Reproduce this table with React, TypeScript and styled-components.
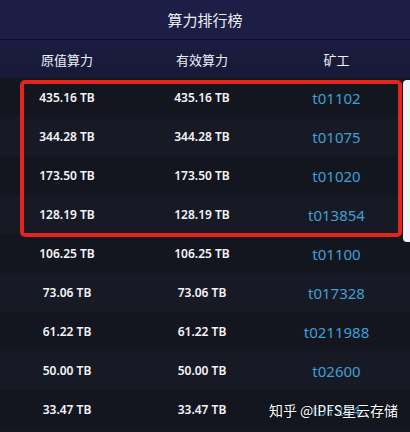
import React from "react";
import styled, { createGlobalStyle } from "styled-components";

const Global = createGlobalStyle`
  html, body { margin: 0; padding: 0; background: #161822; }
  body { font-family: "Noto Sans", "Noto Sans CJK SC", sans-serif; overflow: hidden; }
`;

const Page = styled.div`
  position: relative;
  width: 410px;
  height: 432px;
  overflow: hidden;
  background: #161822;
`;

const Title = styled.div`
  height: 39px;
  display: flex;
  align-items: center;
  justify-content: center;
  background: #1c1e45;
  border-bottom: 1px solid #0e0f2a;
  color: #eceef6;
  font-family: "Noto Sans CJK SC", sans-serif;
  font-size: 15px;
`;

const Columns = styled.div`
  display: grid;
  grid-template-columns: 134px 136px 133px;
  padding-right: 7px;
`;

const HeadRow = styled(Columns)`
  height: 38px;
  align-items: center;
  background: linear-gradient(#1b1d42, #171936);
  color: #eef0f8;
  font-family: "Noto Sans CJK SC", sans-serif;
  font-size: 13px;
`;

const HeadCell = styled.div`
  text-align: center;
`;

const List = styled.div`
  position: relative;
`;

const Row = styled(Columns)<{ $alt: boolean }>`
  height: 39px;
  align-items: center;
  background: ${(p) => (p.$alt ? "#171a24" : "#14161f")};
`;

const Value = styled.div`
  text-align: center;
  color: #f4f5f8;
  font-size: 12px;
  font-weight: 600;
`;

const Miner = styled.div`
  text-align: center;
  color: #3f9fd6;
  font-size: 15px;
`;

const Highlight = styled.div`
  position: absolute;
  left: 20px;
  top: 2px;
  width: 382px;
  height: 157px;
  box-sizing: border-box;
  border: 4px solid #e2261d;
  border-radius: 5px;
  pointer-events: none;
`;

const Thumb = styled.div`
  position: absolute;
  right: 0;
  top: 2px;
  width: 7px;
  height: 162px;
  background: #f4f4f6;
  border-radius: 4px 0 0 4px;
`;

const Watermark = styled.div`
  position: absolute;
  right: 12px;
  bottom: 12px;
  color: #ffffff;
  font-family: "Noto Sans CJK SC", sans-serif;
  font-size: 14px;
  text-shadow: 0 0 2px rgba(0, 0, 0, 0.9), 0 0 1px rgba(0, 0, 0, 0.9);
`;

const rows = [
  ["435.16 TB", "435.16 TB", "t01102"],
  ["344.28 TB", "344.28 TB", "t01075"],
  ["173.50 TB", "173.50 TB", "t01020"],
  ["128.19 TB", "128.19 TB", "t013854"],
  ["106.25 TB", "106.25 TB", "t01100"],
  ["73.06 TB", "73.06 TB", "t017328"],
  ["61.22 TB", "61.22 TB", "t0211988"],
  ["50.00 TB", "50.00 TB", "t02600"],
  ["33.47 TB", "33.47 TB", "t01234"],
];

export default function App() {
  return (
    <Page>
      <Global />
      <Title>算力排行榜</Title>
      <HeadRow>
        <HeadCell>原值算力</HeadCell>
        <HeadCell>有效算力</HeadCell>
        <HeadCell>矿工</HeadCell>
      </HeadRow>
      <List>
        {rows.map((r, i) => (
          <Row key={i} $alt={i % 2 === 1}>
            <Value>{r[0]}</Value>
            <Value>{r[1]}</Value>
            <Miner>{r[2]}</Miner>
          </Row>
        ))}
        <Highlight />
        <Thumb />
      </List>
      <Watermark>知乎 @IPFS星云存储</Watermark>
    </Page>
  );
}
